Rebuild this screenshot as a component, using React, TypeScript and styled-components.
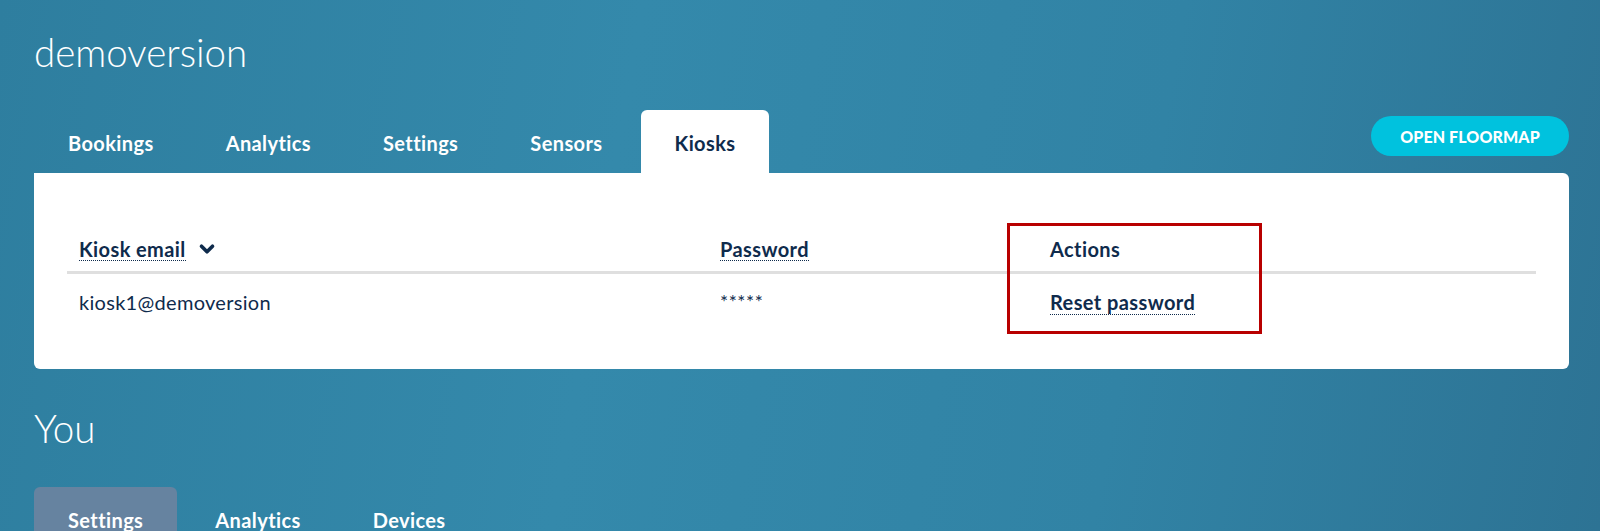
import styled, { createGlobalStyle } from "styled-components";
import { ChevronDown } from "lucide-react";

const GlobalStyle = createGlobalStyle`
  html, body {
    margin: 0;
    padding: 0;
  }
  body {
    font-family: Lato, "Open Sans", sans-serif;
    color: #fff;
  }
`;

const Page = styled.div`
  width: 1600px;
  height: 531px;
  overflow: hidden;
  box-sizing: border-box;
  padding: 27px 31px 0 34px;
  background: linear-gradient(100deg, #2e7e9f 0%, #3489ab 38%, #3183a5 70%, #2d7394 100%);
`;

const Heading = styled.h1`
  margin: 0;
  font-size: 38.5px;
  line-height: 50px;
  font-weight: 300;
  color: #fff;
`;

const TabBar = styled.div<{ $top: number }>`
  display: flex;
  align-items: flex-start;
  margin-top: ${(p) => p.$top}px;
`;

const Tabs = styled.div`
  display: flex;
  gap: 4px;
  flex: 1;
`;

const Tab = styled.div<{ $active?: boolean; $muted?: boolean }>`
  height: 63px;
  box-sizing: border-box;
  padding: 21px 34px 0;
  font-size: 20px;
  letter-spacing: 0.4px;
  line-height: 24px;
  font-weight: 700;
  border-radius: 6px 6px 0 0;
  color: ${(p) => (p.$active ? "#0f2b4c" : "#fff")};
  background: ${(p) => (p.$active ? "#fff" : p.$muted ? "#6683a0" : "transparent")};
`;

const FloorButton = styled.button`
  margin-top: 6px;
  width: 198px;
  height: 40px;
  border: none;
  border-radius: 20px;
  background: #00c2de;
  color: #fff;
  font-family: Lato, sans-serif;
  font-size: 16px;
  font-weight: 900;
  letter-spacing: 0.1px;
  text-transform: uppercase;
`;

const Card = styled.div`
  position: relative;
  background: #fff;
  border-radius: 0 6px 6px 6px;
  padding: 50px 33px 35px;
`;

const Grid = styled.div`
  display: grid;
  grid-template-columns: 641px 330px 1fr;
  color: #0f2b4c;
`;

const HeadCell = styled.div`
  padding: 14px 12px 10px;
  border-bottom: 3px solid #dfdfdf;
  font-size: 20px;
  letter-spacing: 0.4px;
  line-height: 24px;
  font-weight: 700;
  display: flex;
  align-items: center;
  gap: 10px;
`;

const Cell = styled.div<{ $stars?: boolean }>`
  padding: 16px 12px 20px;
  font-size: ${(p) => (p.$stars ? "19px" : "20px")};
  letter-spacing: ${(p) => (p.$stars ? "0.6px" : "0.3px")};
  line-height: 24px;
`;

const Dotted = styled.span`
  border-bottom: 1px dotted #0f2b4c;
  line-height: 22px;
`;

const LinkText = styled(Dotted)`
  font-weight: 700;
  font-size: 20px;
  letter-spacing: 0.4px;
`;

const Highlight = styled.div`
  position: absolute;
  left: 973px;
  top: 50px;
  width: 255px;
  height: 111px;
  box-sizing: border-box;
  border: 3px solid #b80000;
  pointer-events: none;
`;

const SubHeading = styled(Heading)`
  margin-top: 34px;
`;

export default function App() {
  return (
    <Page>
      <GlobalStyle />
      <Heading>demoversion</Heading>
      <TabBar $top={33}>
        <Tabs>
          <Tab>Bookings</Tab>
          <Tab>Analytics</Tab>
          <Tab>Settings</Tab>
          <Tab>Sensors</Tab>
          <Tab $active>Kiosks</Tab>
        </Tabs>
        <FloorButton>Open floormap</FloorButton>
      </TabBar>
      <Card>
        <Grid>
          <HeadCell>
            <Dotted>Kiosk email</Dotted>
            <ChevronDown size={22} strokeWidth={4} />
          </HeadCell>
          <HeadCell>
            <Dotted>Password</Dotted>
          </HeadCell>
          <HeadCell>Actions</HeadCell>
          <Cell>kiosk1@demoversion</Cell>
          <Cell $stars>*****</Cell>
          <Cell>
            <LinkText>Reset password</LinkText>
          </Cell>
        </Grid>
        <Highlight />
      </Card>
      <SubHeading>You</SubHeading>
      <TabBar $top={34}>
        <Tabs>
          <Tab $muted>Settings</Tab>
          <Tab>Analytics</Tab>
          <Tab>Devices</Tab>
        </Tabs>
      </TabBar>
    </Page>
  );
}
